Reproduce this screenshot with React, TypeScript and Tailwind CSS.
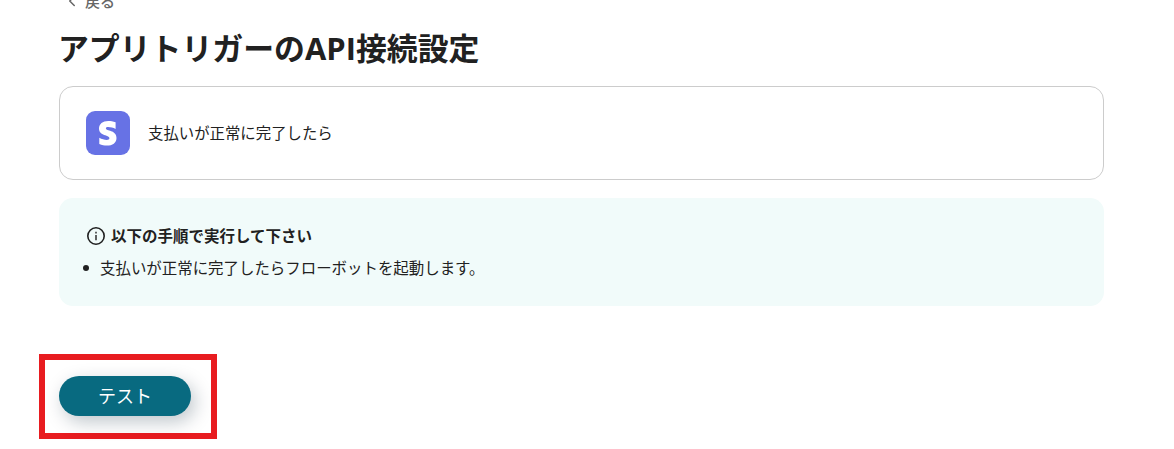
import { ChevronLeft } from 'lucide-react'

const STEPS = ['支払いが正常に完了したらフローボットを起動します。']

function ServiceLogo() {
  return (
    <svg className="size-11 shrink-0" viewBox="0 0 44 44">
      <rect width="44" height="44" rx="9" fill="#6772e5" />
      <path
        d="M19.900 17.500c0-1.100.9-1.500 2.300-1.500 2.300 0 5.200.7 7.400 1.900v-6.600c-2.500-1-4.900-1.400-7.400-1.400-5.500 0-9.200 2.900-9.200 7.700 0 7.600 10.400 6.300 10.400 9.600 0 1.300-1.100 1.700-2.600 1.700-2.300 0-5.200-.9-7.500-2.200v6.300c2.600 1.100 5.100 1.600 7.500 1.600 5.700 0 9.700-2.800 9.700-7.700 0-8.100-10.600-6.700-10.600-9.400z"
        fill="#fff"
      />
    </svg>
  )
}

function InfoIcon() {
  return (
    <svg className="size-5 shrink-0" viewBox="0 0 20 20" fill="none" stroke="currentColor">
      <circle cx="9" cy="10" r="8.200" strokeWidth="1.600" />
      <path d="M9 9v5.200M9 5.800v1.700" strokeWidth="1.400" />
    </svg>
  )
}

export default function App() {
  return (
    <main className="h-[449px] overflow-hidden bg-white pl-[59px] pr-[70px] font-['Noto_Sans','Noto_Sans_CJK_JP',sans-serif] text-[#212121]">
      <button type="button" className="-mt-[9px] flex h-5 items-center gap-1 pl-1 text-[15px] leading-5 font-medium text-[#666]">
        <ChevronLeft className="size-[18px]" />
        戻る
      </button>

      <h1 className="-ml-px mt-[14px] h-[46px] whitespace-nowrap font-['Open_Sans','Noto_Sans_CJK_JP',sans-serif] text-[30.880px] leading-[46px] font-bold">
        アプリトリガーのAPI接続設定
      </h1>

      <section className="mt-[15px] flex h-[94px] items-center gap-[18px] rounded-[14px] border border-[#ccc] px-[26px]">
        <ServiceLogo />
        <span className="pt-0.5 text-[15.400px] leading-6">支払いが正常に完了したら</span>
      </section>

      <section className="mt-[18px] h-[108px] rounded-[14px] bg-[#f1fbfa] px-7 pt-[26px]">
        <div className="flex h-6 items-center gap-1">
          <InfoIcon />
          <h2 className="text-[15.500px] leading-6 font-bold">以下の手順で実行して下さい</h2>
        </div>
        <ul className="mt-2 text-[15.450px] leading-6">
          {STEPS.map((step) => (
            <li key={step} className="-ml-1 flex items-center gap-[11px]">
              <span className="size-1.5 rounded-full bg-[#212121]" />
              {step}
            </li>
          ))}
        </ul>
      </section>

      <div className="-ml-5 mt-12 flex h-[85px] w-[178px] items-start border-[6px] border-[#e81c20] pl-[14px] pt-4">
        <button
          type="button"
          className="h-10 w-[132px] rounded-full bg-[#086a80] text-lg text-white shadow-[4px_6px_18px_rgba(0,30,50,0.25)]"
        >
          テスト
        </button>
      </div>
    </main>
  )
}
